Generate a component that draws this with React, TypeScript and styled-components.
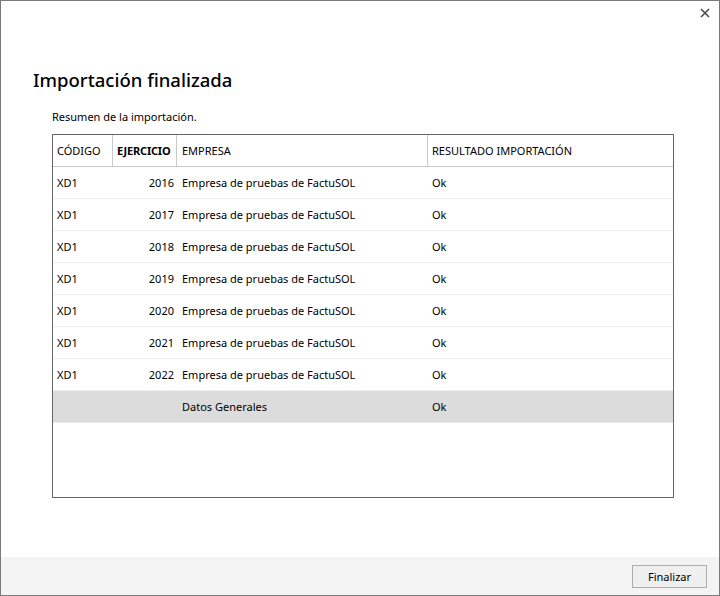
import React from "react";
import styled, { createGlobalStyle } from "styled-components";

const Global = createGlobalStyle`
  html, body { margin: 0; padding: 0; background: #fff; }
  body { font-family: "Noto Sans", "Segoe UI", sans-serif; color: #000; }
  * { box-sizing: border-box; }
`;

const Window = styled.div`
  width: 720px;
  height: 596px;
  border: 1px solid #7a7a7a;
  display: flex;
  flex-direction: column;
  background: #fff;
`;

const TitleBar = styled.div`
  height: 24px;
  display: flex;
  justify-content: flex-end;
  align-items: center;
  padding-right: 9px;
`;

const CloseButton = styled.button`
  border: 0;
  background: transparent;
  padding: 0;
  width: 10px;
  height: 10px;
  display: flex;
  align-items: center;
  justify-content: center;
  cursor: pointer;
`;

const Content = styled.div`
  flex: 1;
  display: flex;
  flex-direction: column;
  padding-left: 31px;
`;

const Title = styled.h1`
  margin: 42px 0 0 1px;
  font-size: 18.5px;
  line-height: 26px;
  font-weight: 500;
`;

const Subtitle = styled.p`
  margin: 16px 0 0 20px;
  font-size: 11px;
  line-height: 16px;
`;

const Table = styled.div`
  margin: 9px 0 0 20px;
  width: 622px;
  height: 364px;
  border: 1px solid #646464;
  display: flex;
  flex-direction: column;
`;

const Row = styled.div<{ $header?: boolean; $selected?: boolean }>`
  display: grid;
  grid-template-columns: 60px 64px 251px 1fr;
  height: 32px;
  flex-shrink: 0;
  border-bottom: 1px solid ${(p) => (p.$header ? "#c9c9c9" : p.$selected ? "#e9e9e9" : "#efefef")};
  background: ${(p) => (p.$selected ? "#dcdcdc" : "transparent")};
  font-size: 11px;
`;

const Cell = styled.div<{ $divider?: boolean; $right?: boolean; $bold?: boolean; $pl?: number }>`
  display: flex;
  align-items: center;
  justify-content: ${(p) => (p.$right ? "flex-end" : "flex-start")};
  padding-left: ${(p) => p.$pl ?? 4}px;
  padding-right: ${(p) => (p.$right ? 3 : 0)}px;
  border-right: ${(p) => (p.$divider ? "1px solid #c9c9c9" : "0")};
  font-weight: ${(p) => (p.$bold ? 700 : 400)};
  letter-spacing: ${(p) => (p.$bold ? "-0.2px" : "0")};
  white-space: nowrap;
  overflow: hidden;
`;

const Footer = styled.div`
  height: 38px;
  background: #f3f3f3;
  display: flex;
  align-items: center;
  justify-content: flex-end;
  padding-right: 12px;
`;

const Button = styled.button`
  width: 75px;
  height: 23px;
  border: 1px solid #adadad;
  background: #efefef;
  font-family: "Noto Sans", "Segoe UI", sans-serif;
  font-size: 11px;
  color: #000;
  padding: 0;
  cursor: pointer;
`;

const rows = [2016, 2017, 2018, 2019, 2020, 2021, 2022];

export default function App() {
  return (
    <>
      <Global />
      <Window>
        <TitleBar>
          <CloseButton aria-label="Cerrar">
            <svg width="10" height="10" viewBox="0 0 10 10">
              <path d="M1 1 L9 9 M9 1 L1 9" stroke="#4a4a4a" strokeWidth="1.6" />
            </svg>
          </CloseButton>
        </TitleBar>
        <Content>
          <Title>Importación finalizada</Title>
          <Subtitle>Resumen de la importación.</Subtitle>
          <Table>
            <Row $header>
              <Cell $divider>CÓDIGO</Cell>
              <Cell $divider $bold $pl={4}>EJERCICIO</Cell>
              <Cell $divider $pl={5}>EMPRESA</Cell>
              <Cell>RESULTADO IMPORTACIÓN</Cell>
            </Row>
            {rows.map((y) => (
              <Row key={y}>
                <Cell>XD1</Cell>
                <Cell $right>{y}</Cell>
                <Cell $pl={5}>Empresa de pruebas de FactuSOL</Cell>
                <Cell>Ok</Cell>
              </Row>
            ))}
            <Row $selected>
              <Cell />
              <Cell />
              <Cell $pl={5}>Datos Generales</Cell>
              <Cell>Ok</Cell>
            </Row>
          </Table>
        </Content>
        <Footer>
          <Button>Finalizar</Button>
        </Footer>
      </Window>
    </>
  );
}
